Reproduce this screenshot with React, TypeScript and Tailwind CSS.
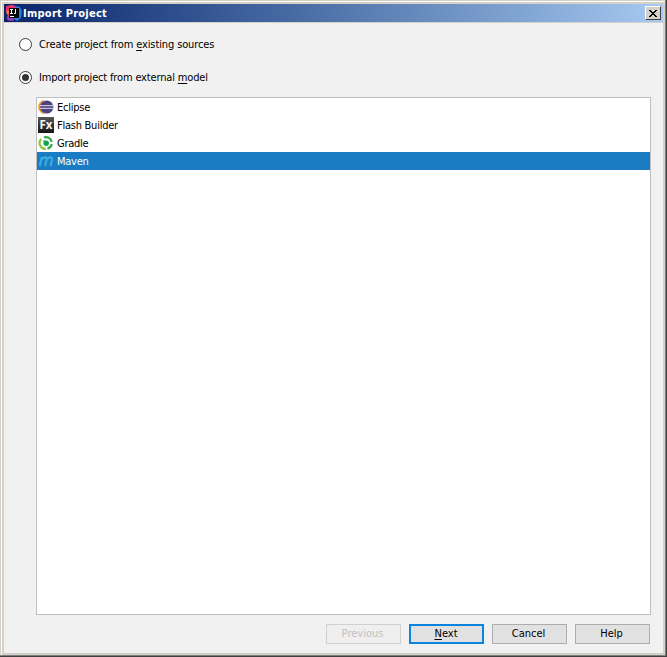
import { useState, type ReactNode } from 'react'

function IdeaIcon() {
  return (
    <svg width="16" height="16" viewBox="0 0 16 16" className="shrink-0">
      <path d="M0 1.200 4 0l5 1 2 4-5 5-3 6-2-2 1-4-2-3z" fill="#e8315b" />
      <path d="m10 1 4 1 2 4-1 7-4 3-4-3V4z" fill="#1a82e2" />
      <path d="m4 0 4 .3L11 3H5z" fill="#d33a86" />
      <path d="m1 11 3 1 5 2-3 2-4-1z" fill="#9b3ec0" />
      <path d="m0 6 3-1v4L1 10z" fill="#f36b45" />
      <rect x="3" y="3" width="10" height="10" fill="#060606" />
      <path d="M4 4.500h3M5.500 4.500v4M4 8.500h3M9.500 4v4.500H8M4 11.500h4" stroke="#fff" fill="none" />
    </svg>
  )
}

function EclipseIcon() {
  return (
    <svg width="16" height="16" viewBox="0 0 16 16">
      <path d="M6 1C-1.500 3-1.500 13 6 15 1.500 11 1.500 5 6 1z" fill="#f59b2d" stroke="#f59b2d" strokeWidth="0.500" />
      <circle cx="8.700" cy="8" r="6.600" fill="#4c437f" />
      <path d="M2 6.500h13.400M2 9.500h13.400" stroke="#c9c5dc" />
      <path d="M2 8h13.400" stroke="#8179a8" />
    </svg>
  )
}

function FlashBuilderIcon() {
  return (
    <svg width="16" height="16" viewBox="0 0 16 16">
      <defs>
        <linearGradient id="fx" x1="0" y1="0" x2="0" y2="1">
          <stop offset="0" stopColor="#555" />
          <stop offset="1" stopColor="#151515" />
        </linearGradient>
      </defs>
      <rect width="16" height="16" fill="url(#fx)" />
      <text x="1.500" y="12" fontSize="11.500" fontWeight="bold" fill="#f5f5f5" fontFamily="Open Sans, sans-serif" textLength="13" lengthAdjust="spacingAndGlyphs">Fx</text>
    </svg>
  )
}

function GradleIcon() {
  return (
    <svg width="16" height="16" viewBox="0 0 16 16" fill="none">
      <path d="M3.200 4A5.800 5.800 0 0 0 8 13.800" stroke="#8cc63f" strokeWidth="2.200" />
      <path d="M6 2.400A5.800 5.800 0 0 1 13.700 7M13.700 9A5.800 5.800 0 0 1 9.500 13.600" stroke="#39a949" strokeWidth="2.200" />
      <path d="M5.500 5.500 8 8" stroke="#14a550" strokeWidth="1.500" />
      <circle cx="8.200" cy="8.200" r="2.700" fill="#14a550" />
    </svg>
  )
}

function MavenIcon() {
  return (
    <svg width="16" height="16" viewBox="0 0 16 16" fill="none">
      <path d="M1.800 13 3.800 4M3.300 6.500C5 4 9 3.500 8.600 6.500L7.200 13M8.600 6.500C10.300 4 14.500 3.500 14 6.500L12.600 13" stroke="#38abe0" strokeWidth="2.200" />
    </svg>
  )
}

const MODELS = [
  { name: 'Eclipse', icon: <EclipseIcon /> },
  { name: 'Flash Builder', icon: <FlashBuilderIcon /> },
  { name: 'Gradle', icon: <GradleIcon /> },
  { name: 'Maven', icon: <MavenIcon /> },
]

interface RadioProps {
  checked: boolean
  onSelect: () => void
  children: ReactNode
}

function Radio({ checked, onSelect, children }: RadioProps) {
  return (
    <button role="radio" aria-checked={checked} onClick={onSelect} className="flex h-[15px] items-center gap-[7px] whitespace-nowrap">
      <span className="flex size-[13px] items-center justify-center rounded-full border border-[#3c3c3c] bg-white">
        {checked && <span className="size-[7px] rounded-full bg-[#333]" />}
      </span>
      <span className="pt-px">{children}</span>
    </button>
  )
}

export default function App() {
  const [mode, setMode] = useState<'sources' | 'model'>('model')
  const [selected, setSelected] = useState('Maven')

  return (
    <div className="h-[657px] w-[667px] border-r border-b border-[#404040] bg-[#d4d0c8] font-['DejaVu_Sans_Condensed','DejaVu_Sans',sans-serif] text-[11px] leading-[14px] text-black">
      <div className="h-full border-r border-b border-r-[#808080] border-b-[#808080] pt-px pl-px">
        <div className="flex h-full flex-col border-t border-l border-white pt-[2px] pr-[2px] pb-[2px] pl-[2px]">
          {/* Title bar */}
          <div className="flex h-[18px] shrink-0 items-center bg-linear-to-r from-[#0a246a] to-[#a6caf0] pr-[2px] pl-[2px]">
            <IdeaIcon />
            <span className="ml-px flex-1 pt-px text-[11px] font-bold tracking-[0.25px] text-white">Import Project</span>
            <button className="flex h-[14px] w-4 items-center justify-center border border-t-white border-r-[#404040] border-b-[#404040] border-l-white bg-[#d4d0c8]" aria-label="Close">
              <svg width="8" height="7" viewBox="0 0 8 7" shapeRendering="crispEdges">
                <path d="M0 0h2v1h1v1h2V1h1V0h2v1H7v1H6v1H5v1h1v1h1v1h1v1H6V6H5V5H3v1H2v1H0V6h1V5h1V4h1V3H2V2H1V1H0z" />
              </svg>
            </button>
          </div>

          <div className="mt-px flex min-h-0 flex-1 flex-col bg-[#f1f1f1] pr-[12px] pb-[9px] pl-[15px]">
            <div role="radiogroup" className="flex flex-col gap-[18px] pt-[14px]">
              <Radio checked={mode === 'sources'} onSelect={() => setMode('sources')}>
                <span className="tracking-[-0.12px]">
                  Create project from <span className="underline decoration-1 underline-offset-2">e</span>xisting sources
                </span>
              </Radio>
              <Radio checked={mode === 'model'} onSelect={() => setMode('model')}>
                <span className="tracking-[-0.16px]">
                  Import project from external <span className="underline decoration-1 underline-offset-2">m</span>odel
                </span>
              </Radio>
            </div>

            <div className="mt-[12px] ml-[17px] h-[518px] shrink-0 border border-[#bfbfbf] bg-white">
              {MODELS.map((m) => (
                <div
                  key={m.name}
                  onClick={() => setSelected(m.name)}
                  className={`flex h-[18px] items-center gap-[3px] pl-px ${selected === m.name ? 'bg-[#1a7dc4] text-white' : ''}`}
                >
                  {m.icon}
                  <span className="pt-[2px] tracking-[-0.25px]">{m.name}</span>
                </div>
              ))}
            </div>

            <div className="mt-auto mr-px flex justify-end gap-2">
              <button disabled className="h-5 w-[75px] border border-[#d0d0d0] bg-[#efefef] pr-[2px] pb-px text-[#bfbfbf]">Previous</button>
              <button className="h-5 w-[75px] border-2 border-[#0a84dc] bg-[#e1e1e1] pr-px pb-px">
                <span className="underline decoration-1 underline-offset-2">N</span>ext
              </button>
              <button className="h-5 w-[75px] border border-[#adadad] bg-[#e1e1e1] pr-[2px] pb-px">Cancel</button>
              <button className="h-5 w-[75px] border border-[#adadad] bg-[#e1e1e1] pr-[2px] pb-px">Help</button>
            </div>
          </div>
        </div>
      </div>
    </div>
  )
}
